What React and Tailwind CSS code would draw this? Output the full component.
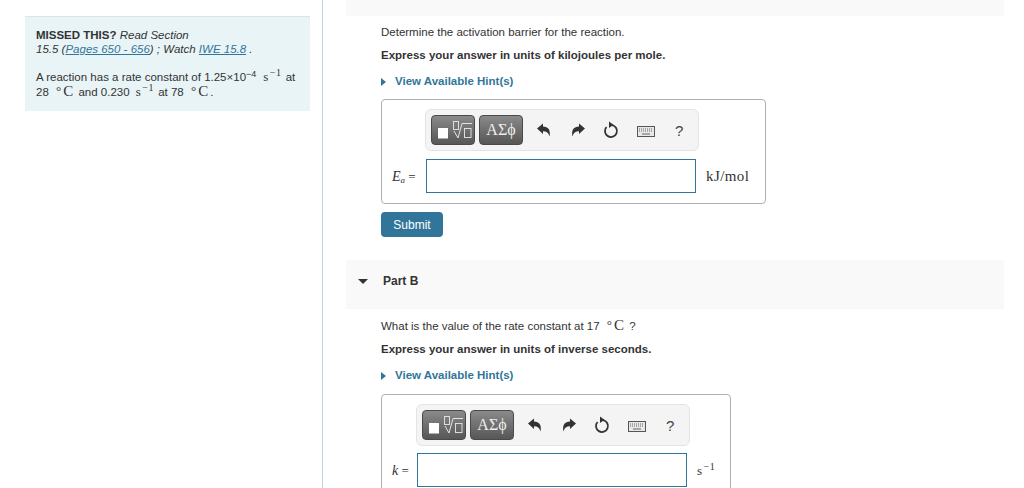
const serif = "font-['Liberation_Serif',serif]";

function Toolbar() {
  return (
    <div className="flex items-center h-[42px] w-[274px] bg-[#f4f4f4] border border-[#e4e4e4] rounded-md pl-[5px]">
      <div className="flex items-center justify-center w-[44px] h-[30px] rounded bg-gradient-to-b from-[#8a8a8a] to-[#575757] border border-[#4a4a4a]">
        <svg width="38" height="24" viewBox="0 0 38 24" fill="none">
          <rect x="4" y="10" width="10" height="10.5" fill="#fff" />
          <rect x="19.5" y="3.5" width="5" height="8" stroke="#ddd" />
          <path d="M20 13 L24 20 L28 5.5 H38" stroke="#e4e4e4" />
          <rect x="30.5" y="10.5" width="6.5" height="9" stroke="#ddd" />
        </svg>
      </div>
      <div className={`flex items-center justify-center ml-[4px] w-[44px] h-[30px] rounded bg-gradient-to-b from-[#8a8a8a] to-[#575757] border border-[#4a4a4a] text-[#eee] text-[16px] ${serif}`}>
        ΑΣϕ
      </div>
      <svg className="ml-[13px]" width="16" height="16" viewBox="0 0 16 16" fill="#333">
        <path d="M1 6.5 L7 1.5 V4.5 C12 4.5 15 8 13.5 14.5 C12.8 11 10.5 9.2 7 9.2 V12 Z" />
      </svg>
      <svg className="ml-[18px]" width="16" height="16" viewBox="0 0 16 16" fill="#333">
        <path d="M15 6.5 L9 1.5 V4.5 C4 4.5 1 8 2.5 14.5 C3.2 11 5.5 9.2 9 9.2 V12 Z" />
      </svg>
      <svg className="ml-[17px]" width="16" height="18" viewBox="0 0 16 18" fill="none">
        <path d="M9 4.1 A6 6 0 1 1 3.5 6" stroke="#333" strokeWidth="1.8" />
        <path d="M6 0.5 L10.5 3.8 L6 7 Z" fill="#333" />
      </svg>
      <svg className="ml-[18px] mt-[3px]" width="18" height="11" viewBox="0 0 18 11" fill="none">
        <rect x="0.5" y="0.5" width="17" height="10" fill="#e8e8e8" stroke="#555" />
        <path d="M2 3 H16 M2 5 H16" stroke="#666" strokeDasharray="1 1" />
        <path d="M5 8 H13" stroke="#666" />
      </svg>
      <span className="ml-[20px] text-[15px] leading-none text-[#444] font-['Liberation_Sans',sans-serif]">?</span>
    </div>
  );
}

function Unit() {
  return (
    <span className={`${serif} text-[13px] tracking-[0.5px]`}>
      s<sup className="text-[10px] ml-[1px]">−1</sup>
    </span>
  );
}

function Degree() {
  return (
    <span className={`${serif} text-[15px] ml-[4px] mr-[2px]`}>
      <sup className="text-[13px] -top-[1px] mr-[2px]">°</sup>C
    </span>
  );
}

function Hint() {
  return (
    <div className="flex items-center h-[14px] text-[11.5px] font-bold text-[#31769a]">
      <span className="w-0 h-0 border-y-[4px] border-y-transparent border-l-[5px] border-l-[#31769a] mr-[9px]"></span>
      View Available Hint(s)
    </div>
  );
}

export default function App() {
  return (
    <div className="flex h-[488px] w-[1024px] overflow-hidden bg-white text-[#333] font-['Liberation_Sans',sans-serif]">
      <div className="w-[323px] shrink-0 border-r border-[#c3d3e3] pt-[16px] pl-[25px] pr-[12px]">
        <div className="h-[95px] bg-[#e9f4f7] border-t border-[#dde3e8] pt-[11px] px-[11px] text-[11.5px] leading-[14px]">
          <p className="italic">
            <b className="not-italic">MISSED THIS?</b> Read Section
            <br />
            15.5 (<a className="text-[#31769a] underline">Pages 650 - 656</a>) ; Watch{' '}
            <a className="text-[#31769a] underline">IWE 15.8</a> .
          </p>
          <p className="mt-[14px] whitespace-nowrap">
            A reaction has a rate constant of 1.25×10<sup className="text-[9px]">−4</sup>
            <span className="ml-[7px] mr-[1px]"><Unit /></span> at
            <br />
            28 <Degree /> and 0.230 <span className="ml-[3px] mr-[1px]"><Unit /></span> at 78 <Degree />.
          </p>
        </div>
      </div>

      <div className="ml-[23px] w-[658px] shrink-0">
        <div className="h-[16px] bg-[#f9f9f9]"></div>
        <div className="pl-[35px] pt-[10px]">
          <p className="text-[11.5px] leading-[13px]">Determine the activation barrier for the reaction.</p>
          <p className="mt-[10px] text-[11.5px] leading-[13px] font-bold">Express your answer in units of kilojoules per mole.</p>
          <div className="mt-[13px]"><Hint /></div>
          <div className="mt-[10px] w-[385px] h-[105px] border border-[#b0b0b0] rounded pt-[9px] pl-[43px]">
            <Toolbar />
            <div className="flex items-center mt-[8px] -ml-[33px]">
              <span className={`w-[34px] text-[13px] ${serif}`}>
                <i className="text-[14px]">E<sub className="text-[9px]">a</sub></i> =
              </span>
              <div className="w-[270px] h-[34px] border border-[#31769a]"></div>
              <span className={`ml-[10px] text-[15px] tracking-[0.4px] ${serif}`}>kJ/mol</span>
            </div>
          </div>
          <button className="mt-[8px] block w-[62px] h-[25px] bg-[#31769a] rounded-sm text-white text-[12px]">Submit</button>
        </div>

        <div className="mt-[23px] h-[49px] bg-[#f9f9f9] flex items-center pl-[12px] pb-[7px]">
          <span className="w-0 h-0 border-x-[5px] border-x-transparent border-t-[5px] border-t-[#333]"></span>
          <span className="ml-[15px] text-[12px] font-bold">Part B</span>
        </div>
        <div className="pl-[35px] pt-[10px]">
          <p className="text-[11.5px] leading-[13px]">What is the value of the rate constant at 17 <Degree /> ?</p>
          <p className="mt-[10px] text-[11.5px] leading-[13px] font-bold">Express your answer in units of inverse seconds.</p>
          <div className="mt-[13px]"><Hint /></div>
          <div className="mt-[11px] w-[350px] h-[110px] border border-[#b0b0b0] rounded pt-[9px] pl-[34px]">
            <Toolbar />
            <div className="flex items-center mt-[7px] -ml-[24px]">
              <span className={`w-[25px] text-[13px] ${serif}`}><i className="text-[14px]">k</i> =</span>
              <div className="w-[270px] h-[34px] border border-[#31769a]"></div>
              <span className="ml-[10px]"><Unit /></span>
            </div>
          </div>
        </div>
      </div>
    </div>
  );
}
